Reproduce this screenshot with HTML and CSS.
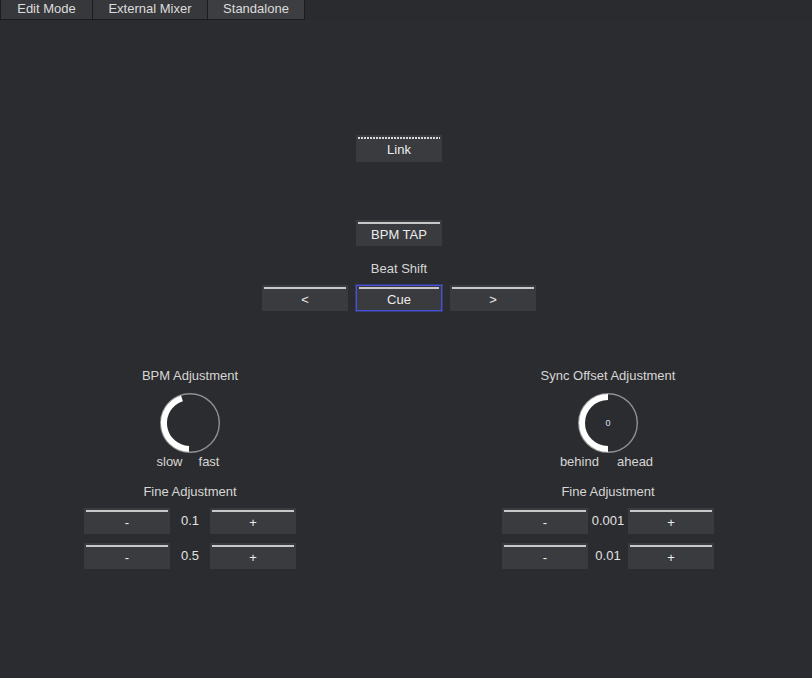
FILE: index.html
```html
<!DOCTYPE html>
<html>
<head>
<meta charset="utf-8">
<link rel="stylesheet" href="styles.css">
</head>
<body>
<div class="tabs">
  <div class="tab tab-edit">Edit Mode</div>
  <div class="tab tab-ext">External Mixer</div>
  <div class="tab tab-std active">Standalone</div>
</div>
<div class="page">
  <div class="center">
    <button class="btn btn-link dotted">Link</button>
    <button class="btn btn-tap">BPM TAP</button>
    <div class="label beat-label">Beat Shift</div>
    <div class="beat-row">
      <button class="btn">&lt;</button>
      <button class="btn cue">Cue</button>
      <button class="btn">&gt;</button>
    </div>
  </div>
  <div class="lower">
    <div class="group">
      <div class="label">BPM Adjustment</div>
      <svg class="knob" viewBox="0 0 64 64" width="64" height="64">
        <circle cx="32" cy="32" r="29.3" fill="none" stroke="#909092" stroke-width="1.4"/>
        <path d="M23.97 7.27 A26 26 0 0 0 31 58" fill="none" stroke="#ffffff" stroke-width="6"/>
      </svg>
      <div class="ends ends-bpm"><span>slow</span><span>fast</span></div>
      <div class="label fine-label">Fine Adjustment</div>
      <div class="fine">
        <button class="btn">-</button><span class="val">0.1</span><button class="btn">+</button>
        <button class="btn">-</button><span class="val">0.5</span><button class="btn">+</button>
      </div>
    </div>
    <div class="group">
      <div class="label">Sync Offset Adjustment</div>
      <div class="knob-wrap">
        <svg class="knob" viewBox="0 0 64 64" width="64" height="64">
          <circle cx="32" cy="32" r="29.3" fill="none" stroke="#909092" stroke-width="1.4"/>
          <path d="M32 6 A26 26 0 0 0 32 58" fill="none" stroke="#ffffff" stroke-width="6"/>
        </svg>
        <span class="knob-val">0</span>
      </div>
      <div class="ends ends-sync"><span>behind</span><span>ahead</span></div>
      <div class="label fine-label">Fine Adjustment</div>
      <div class="fine">
        <button class="btn">-</button><span class="val">0.001</span><button class="btn">+</button>
        <button class="btn">-</button><span class="val">0.01</span><button class="btn">+</button>
      </div>
    </div>
  </div>
</div>
</body>
</html>
```

FILE: styles.css
```css
html, body {
  margin: 0;
  padding: 0;
  background: #2b2c2f;
  width: 812px;
  height: 678px;
  overflow: hidden;
  font-family: "Liberation Sans", Arial, sans-serif;
  font-size: 13px;
  color: #e4e4e4;
}

.tabs {
  display: flex;
  height: 20px;
  background: #2a2b2e;
}

.tab {
  box-sizing: border-box;
  height: 20px;
  line-height: 18px;
  text-align: center;
  font-size: 13px;
  color: #dcdcdc;
  background: #37383b;
  border-right: 1px solid #1c1c1e;
  border-bottom: 1px solid #1c1c1e;
}

.tab-edit { width: 93px; border-left: 1px solid #1c1c1e; }
.tab-ext { width: 115px; }
.tab-std { width: 97px; }
.tab.active { background: #3d3e41; }

.page {
  width: 798px;
}

.center {
  display: flex;
  flex-direction: column;
  align-items: center;
}

.btn {
  position: relative;
  box-sizing: border-box;
  width: 86px;
  height: 26px;
  padding: 3px 0 0;
  margin: 0;
  border: none;
  background: #3a3b3e;
  color: #ececec;
  font-family: "Liberation Sans", Arial, sans-serif;
  font-size: 13px;
  line-height: 16px;
  text-align: center;
}

.btn::before {
  content: "";
  position: absolute;
  left: 2px;
  right: 2px;
  top: 2px;
  height: 2px;
  background: #c8c8c8;
}

.btn.dotted::before {
  background: repeating-linear-gradient(to right, #d8d8d8 0 2px, transparent 2px 3px);
}

.btn-link {
  margin-top: 115px;
  height: 27px;
}

.btn-tap {
  margin-top: 58px;
}

.label {
  line-height: 16px;
  color: #d6d6d6;
  text-align: center;
}

.beat-label {
  margin-top: 15px;
}

.beat-row {
  display: flex;
  gap: 8px;
  margin-top: 8px;
}

.btn.cue {
  box-shadow: inset 0 0 0 1px #4650d8;
  outline: 1px solid rgba(70, 80, 216, 0.45);
}

.btn.cue::before {
  left: 3px;
  right: 3px;
}

.lower {
  display: flex;
  justify-content: space-between;
  margin-top: 57px;
  padding: 0 84px;
}

.group {
  display: flex;
  flex-direction: column;
  align-items: center;
  width: 212px;
}

.knob {
  display: block;
}

.group > .knob,
.knob-wrap {
  margin-top: 7px;
}

.knob-wrap {
  position: relative;
  width: 64px;
  height: 64px;
}

.knob-val {
  position: absolute;
  left: 0;
  right: 0;
  top: 26px;
  text-align: center;
  font-size: 9px;
  line-height: 12px;
  color: #d8e0ff;
}

.ends {
  display: flex;
  line-height: 14px;
  color: #d6d6d6;
}

.ends-bpm {
  gap: 16px;
  margin-left: -4px;
}

.ends-sync {
  gap: 18px;
  margin-left: -3px;
}

.fine-label {
  margin-top: 15px;
}

.fine {
  display: grid;
  grid-template-columns: 86px 40px 86px;
  row-gap: 9px;
  margin-top: 8px;
}

.val {
  line-height: 26px;
  text-align: center;
  color: #e2e2e2;
}
```
